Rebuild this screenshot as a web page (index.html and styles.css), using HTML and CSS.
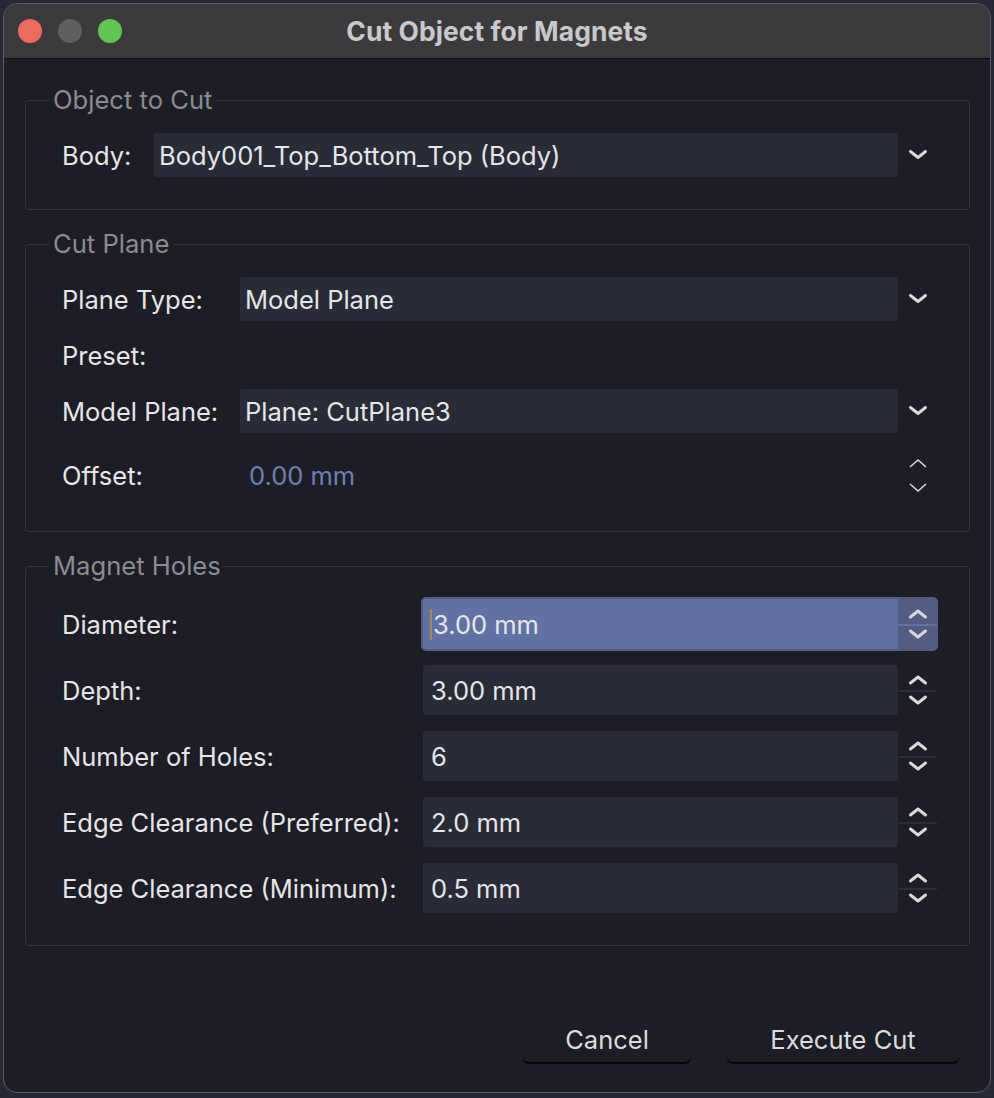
FILE: index.html
```html
<!DOCTYPE html>
<html lang="en">
<head>
    <meta charset="UTF-8">
    <title>Cut Object for Magnets</title>
    <link rel="stylesheet" href="styles.css">
</head>
<body>
    <div class="window">
        <div class="titlebar">
            <div class="lights">
                <span class="light red"></span>
                <span class="light grey"></span>
                <span class="light green"></span>
            </div>
            <div class="title">Cut Object for Magnets</div>
            <div></div>
        </div>

        <div class="content">
            <fieldset class="group">
                <legend>Object to Cut</legend>
                <div class="rows rows-object">
                    <label>Body:</label>
                    <div class="field">Body001_Top_Bottom_Top (Body)</div>
                    <div class="arrow">
                        <svg width="20" height="12" viewBox="0 0 20 12"><path d="M2.5 2.5 L10 8.5 L17.5 2.5" /></svg>
                    </div>
                </div>
            </fieldset>

            <fieldset class="group group-plane">
                <legend>Cut Plane</legend>
                <div class="rows rows-plane">
                    <label>Plane Type:</label>
                    <div class="field">Model Plane</div>
                    <div class="arrow">
                        <svg width="20" height="12" viewBox="0 0 20 12"><path d="M2.5 2.5 L10 8.5 L17.5 2.5" /></svg>
                    </div>

                    <label>Preset:</label>
                    <div></div>
                    <div></div>

                    <label>Model Plane:</label>
                    <div class="field">Plane: CutPlane3</div>
                    <div class="arrow">
                        <svg width="20" height="12" viewBox="0 0 20 12"><path d="M2.5 2.5 L10 8.5 L17.5 2.5" /></svg>
                    </div>

                    <label>Offset:</label>
                    <div class="field plain">0.00 mm</div>
                    <div class="arrow thin">
                        <svg width="20" height="11" viewBox="0 0 20 11"><path d="M2 9 L10 2 L18 9" /></svg>
                        <svg width="20" height="11" viewBox="0 0 20 11"><path d="M2 2 L10 9 L18 2" /></svg>
                    </div>
                </div>
            </fieldset>

            <fieldset class="group">
                <legend>Magnet Holes</legend>
                <div class="rows rows-magnet">
                    <label>Diameter:</label>
                    <div class="spin focus">
                        <div class="field"><span class="caret"></span>3.00 mm</div>
                        <div class="steps">
                            <div class="step"><svg width="20" height="12" viewBox="0 0 20 12"><path d="M2.5 9 L10 3 L17.5 9" /></svg></div>
                            <div class="step"><svg width="20" height="12" viewBox="0 0 20 12"><path d="M2.5 3 L10 9 L17.5 3" /></svg></div>
                        </div>
                    </div>

                    <label>Depth:</label>
                    <div class="spin">
                        <div class="field">3.00 mm</div>
                        <div class="steps">
                            <div class="step"><svg width="20" height="12" viewBox="0 0 20 12"><path d="M2.5 9 L10 3 L17.5 9" /></svg></div>
                            <div class="step"><svg width="20" height="12" viewBox="0 0 20 12"><path d="M2.5 3 L10 9 L17.5 3" /></svg></div>
                        </div>
                    </div>

                    <label>Number of Holes:</label>
                    <div class="spin">
                        <div class="field">6</div>
                        <div class="steps">
                            <div class="step"><svg width="20" height="12" viewBox="0 0 20 12"><path d="M2.5 9 L10 3 L17.5 9" /></svg></div>
                            <div class="step"><svg width="20" height="12" viewBox="0 0 20 12"><path d="M2.5 3 L10 9 L17.5 3" /></svg></div>
                        </div>
                    </div>

                    <label>Edge Clearance (Preferred):</label>
                    <div class="spin">
                        <div class="field">2.0 mm</div>
                        <div class="steps">
                            <div class="step"><svg width="20" height="12" viewBox="0 0 20 12"><path d="M2.5 9 L10 3 L17.5 9" /></svg></div>
                            <div class="step"><svg width="20" height="12" viewBox="0 0 20 12"><path d="M2.5 3 L10 9 L17.5 3" /></svg></div>
                        </div>
                    </div>

                    <label>Edge Clearance (Minimum):</label>
                    <div class="spin">
                        <div class="field">0.5 mm</div>
                        <div class="steps">
                            <div class="step"><svg width="20" height="12" viewBox="0 0 20 12"><path d="M2.5 9 L10 3 L17.5 9" /></svg></div>
                            <div class="step"><svg width="20" height="12" viewBox="0 0 20 12"><path d="M2.5 3 L10 9 L17.5 3" /></svg></div>
                        </div>
                    </div>
                </div>
            </fieldset>

            <div class="buttons">
                <button class="btn cancel">Cancel</button>
                <button class="btn execute">Execute Cut</button>
            </div>
        </div>
    </div>
</body>
</html>
```

FILE: styles.css
```css
body {
    margin: 0;
    height: 1098px;
    background-color: #262935;
    font-family: Inter, "Liberation Sans", sans-serif;
    overflow: hidden;
}
.window {
    margin: 3px 0 0 3px;
    width: 986px;
    height: 1088px;
    border: 1px solid #5c5c62;
    border-radius: 14px;
    background-color: #1d1d25;
    overflow: hidden;
    display: flex;
    flex-direction: column;
}
.titlebar {
    height: 54px;
    background-color: #3b3b3d;
    border-bottom: 1px solid #0c0c0e;
    display: grid;
    grid-template-columns: 1fr auto 1fr;
    align-items: center;
}
.lights {
    display: flex;
    gap: 16px;
    padding-left: 14px;
}
.light {
    width: 24px;
    height: 24px;
    border-radius: 50%;
}
.light.red {
    background-color: #ed6a5e;
}
.light.grey {
    background-color: #5f5f61;
}
.light.green {
    background-color: #61c554;
}
.title {
    color: #c9c9cb;
    font-size: 26.4px;
    font-weight: 700;
    letter-spacing: 0.1px;
}
.content {
    flex: 1;
    padding: 28px 20px 0 21px;
    display: flex;
    flex-direction: column;
    gap: 21px;
}
.group {
    margin: 0;
    border: 1px solid #34353e;
    border-radius: 4px;
    padding: 20px 31px 32px 36px;
    min-width: 0;
}
.group-plane {
    padding-bottom: 26px;
}
.group legend {
    margin-left: -13px;
    padding: 0 4px;
    color: #8b8b90;
    font-size: 25.6px;
    line-height: 26px;
}
.rows {
    display: grid;
    align-items: center;
    color: #e6e6e8;
    font-size: 25.5px;
}
.rows-object {
    grid-template-columns: 92px 1fr 40px;
    grid-auto-rows: 44px;
}
.rows-plane {
    grid-template-columns: 178px 1fr 40px;
    grid-template-rows: 44px 44px 44px 60px;
    row-gap: 12px;
}
.rows-magnet {
    grid-template-columns: 361px 1fr;
    grid-auto-rows: 50px;
    row-gap: 16px;
}
.field {
    height: 100%;
    background-color: #292b36;
    border-radius: 2px;
    display: flex;
    align-items: center;
    padding-left: 5px;
    white-space: nowrap;
}
.field.plain {
    background: none;
    padding-left: 9px;
    color: #6e7fb6;
}
.arrow {
    display: flex;
    flex-direction: column;
    align-items: center;
    justify-content: center;
}
.arrow svg path,
.step svg path {
    fill: none;
    stroke: #d9d9db;
    stroke-width: 3;
    stroke-linecap: round;
    stroke-linejoin: round;
}
.arrow.thin {
    gap: 13px;
}
.arrow.thin svg path {
    stroke-width: 1.6;
    stroke-linecap: butt;
    stroke-linejoin: miter;
}
.spin {
    height: 100%;
    display: flex;
}
.spin .field {
    flex: 1;
    padding-left: 8px;
}
.steps {
    width: 40px;
    display: flex;
    flex-direction: column;
}
.step {
    flex: 1;
    display: flex;
    align-items: center;
    justify-content: center;
}
.step:first-child {
    border-bottom: 2px solid #2b2d37;
    margin-right: 1px;
    align-items: flex-end;
    padding-bottom: 4px;
}
.step:last-child {
    align-items: flex-start;
    padding-top: 2px;
}
.spin.focus {
    height: 54px;
    margin-left: -2px;
    padding-left: 2px;
    background-color: #545c81;
    border-radius: 5px;
}
.spin.focus .field {
    height: 50px;
    margin-top: 2px;
    background-color: #6171a4;
    border-radius: 3px 0 0 3px;
    padding-left: 7px;
}
.spin.focus .step:first-child {
    border-bottom-color: #6171a4;
}
.caret {
    width: 2px;
    height: 31px;
    background-color: #a48b52;
    margin-right: 1px;
}
.buttons {
    margin-top: 49px;
    display: flex;
    justify-content: flex-end;
    gap: 36px;
    padding-right: 11px;
}
.btn {
    height: 46px;
    background-color: transparent;
    border: none;
    border-radius: 6px;
    box-shadow: 0 2px 0 #060608;
    color: #dcdcde;
    font-family: Inter, "Liberation Sans", sans-serif;
    font-size: 25.5px;
}
.btn.cancel {
    width: 168px;
}
.btn.execute {
    width: 232px;
}
```
